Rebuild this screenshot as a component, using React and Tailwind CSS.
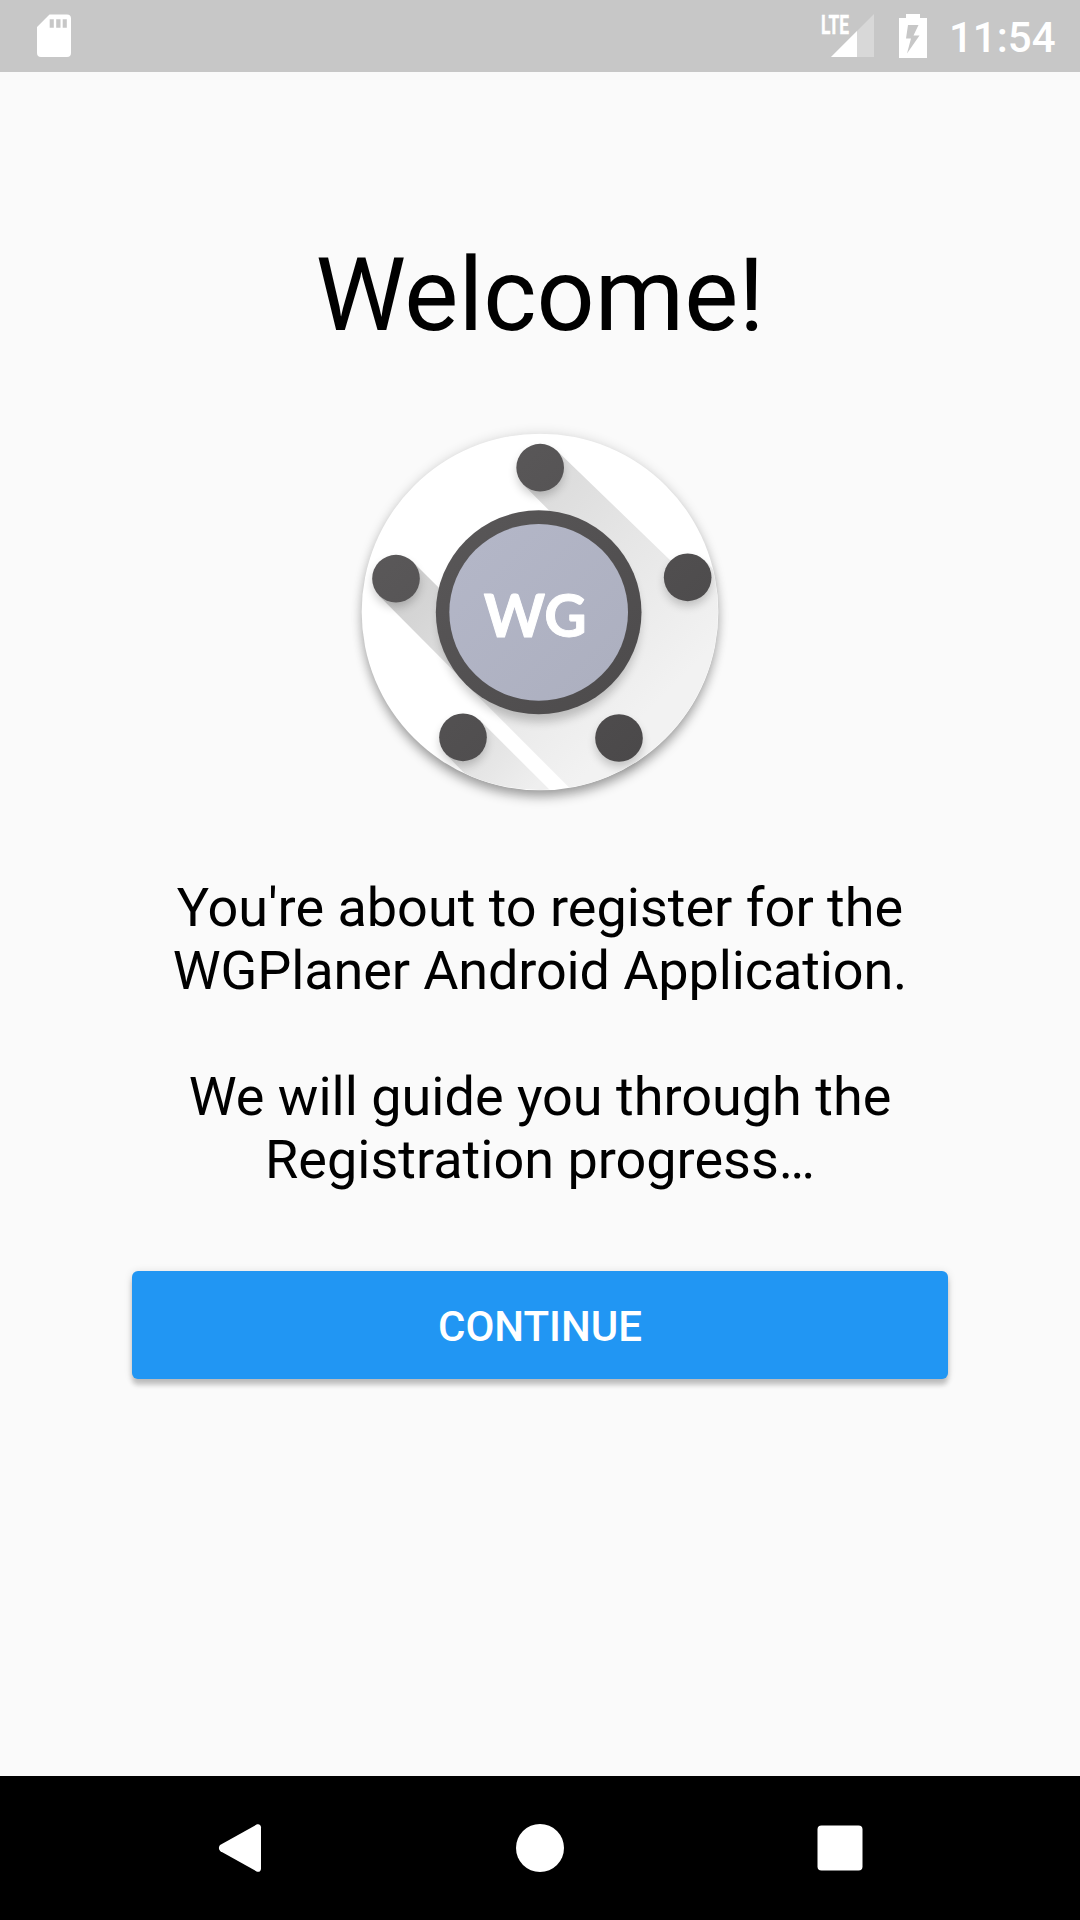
function StatusBar() {
  return (
    <header className="flex h-[72px] items-center bg-[#c7c7c7] pl-[36px] pr-[24px] text-white">
      <svg className="h-[44px] w-[36px]" viewBox="36 14 36 44" fill="none">
        <path
          fill="#fff"
          fillRule="evenodd"
          d="M49.500 14.500H67a4 4 0 0 1 4 4v34.500a4 4 0 0 1-4 4H41a4 4 0 0 1-4-4V27zM49.700 19.200v8.500h4.100v-8.500zM56.200 19.200v8.500h4.300v-8.500zM62.700 19.200v8.500h4.100v-8.500z"
        />
      </svg>
      <div className="ml-auto flex items-center">
        <svg className="h-[44px] w-[54px] overflow-visible" viewBox="821 14 54 44">
          <path d="M874 14v43h-43z" fill="#d8d8d8" />
          <path d="M857 31v26h-26z" fill="#fff" />
          <text
            x="821"
            y="33.500"
            fill="#fff"
            stroke="#fff"
            strokeWidth="0.400"
            fontFamily="Roboto, sans-serif"
            fontWeight="700"
            fontSize="26"
            textLength="28"
            lengthAdjust="spacingAndGlyphs"
          >
            LTE
          </text>
        </svg>
        <svg className="ml-[23px] h-[44px] w-[30px]" viewBox="898 14 30 44">
          <path
            fill="#fff"
            fillRule="evenodd"
            d="M906 14h14v4h7v40h-28V18h7zM908 25l-2 13.500h5L907 53.500L919.500 35.500h-6L918.500 25z"
          />
        </svg>
        <span className="ml-[21px] w-[107px] pt-[2px] text-[42px] leading-[49px] font-medium">11:54</span>
      </div>
    </header>
  );
}

const DOTS = [
  [600.5, 143],
  [168, 476],
  [1043, 472],
  [369, 952],
  [837, 954],
];

function Logo() {
  return (
    <svg className="mt-[65px] h-[400px] w-[400px] overflow-visible" viewBox="0 0 1200 1200">
      <defs>
        <clipPath id="disc">
          <circle cx="600" cy="576" r="534" />
        </clipPath>
        <linearGradient id="rim" gradientUnits="userSpaceOnUse" x1="200" y1="200" x2="950" y2="950">
          <stop offset="0" stopColor="#5b595a" />
          <stop offset="1" stopColor="#4b494a" />
        </linearGradient>
        <linearGradient id="face" gradientUnits="userSpaceOnUse" x1="400" y1="380" x2="790" y2="770">
          <stop offset="0" stopColor="#b3b6c7" />
          <stop offset="1" stopColor="#adb0c0" />
        </linearGradient>
        <linearGradient id="cast" gradientUnits="userSpaceOnUse" x1="330" y1="330" x2="900" y2="900">
          <stop offset="0" stopColor="#d8d8d8" />
          <stop offset="0.5" stopColor="#e6e6e6" />
          <stop offset="1" stopColor="#f2f2f2" />
        </linearGradient>
        <linearGradient id="castLeft" gradientUnits="userSpaceOnUse" x1="170" y1="480" x2="620" y2="930">
          <stop offset="0" stopColor="#cfcfcf" />
          <stop offset="0.4" stopColor="#dcdcdc" />
          <stop offset="1" stopColor="#ebebeb" />
        </linearGradient>
        <linearGradient id="castLow" gradientUnits="userSpaceOnUse" x1="369" y1="952" x2="560" y2="1130">
          <stop offset="0" stopColor="#dedede" />
          <stop offset="1" stopColor="#efefef" />
        </linearGradient>
        <filter id="soft" x="-20%" y="-20%" width="140%" height="140%">
          <feGaussianBlur stdDeviation="18" />
        </filter>
        <filter id="softDot" x="-50%" y="-50%" width="200%" height="200%">
          <feGaussianBlur stdDeviation="14" />
        </filter>
      </defs>

      <circle cx="600" cy="576" r="536" fill="#000" opacity="0.12" filter="url(#soft)" />
      <circle cx="600" cy="600" r="530" fill="#000" opacity="0.33" filter="url(#soft)" />
      <circle cx="600" cy="576" r="535" fill="#fff" />

      <g clipPath="url(#disc)">
        <path d="M218 425L500 705L380 792L117 527Z" fill="url(#castLeft)" />
        <path d="M651 92L1000 430L1093 421L1250 578V1250H835L378 793L600 577L700 344L550 194Z" fill="url(#cast)" />
        <path d="M420 901L700 1180H490L318 1003Z" fill="url(#castLow)" />
      </g>

      <circle cx="598" cy="604" r="302" fill="#000" opacity="0.2" filter="url(#softDot)" />
      {DOTS.map(([x, y]) => (
        <circle key={x} cx={x} cy={y + 16} r="70" fill="#000" opacity="0.2" filter="url(#softDot)" />
      ))}
      {DOTS.map(([x, y]) => (
        <circle key={x} cx={x} cy={y} r="71.500" fill="url(#rim)" />
      ))}
      <ellipse cx="596" cy="577" rx="308.500" ry="306" fill="url(#rim)" />
      <ellipse cx="596" cy="577" rx="268" ry="265" fill="url(#face)" />
      <text
        x="431"
        y="652"
        fill="#fff"
        stroke="#fff"
        strokeWidth="3"
        strokeLinejoin="round"
        fontFamily="Lato, sans-serif"
        fontWeight="700"
        fontSize="179"
        textLength="309"
        lengthAdjust="spacingAndGlyphs"
      >
        WG
      </text>
    </svg>
  );
}

function NavBar() {
  return (
    <nav className="flex h-[144px] items-center justify-between bg-black pl-[216px] pr-[216px]">
      <svg className="h-[48px] w-[48px]" viewBox="0 0 48 48" fill="#fff">
        <path d="M4.500 20.800L40.500.6C42.800-.6 45 .9 45 3.300V44.700C45 47.100 42.800 48.600 40.500 47.400L4.500 27.200C2.400 25.800 2.400 22.200 4.500 20.800Z" />
      </svg>
      <span className="h-[48px] w-[48px] rounded-full bg-white" />
      <svg className="h-[48px] w-[48px]" viewBox="0 0 48 48" fill="#fff">
        <rect x="1.500" y="1.500" width="45" height="45" rx="4" />
      </svg>
    </nav>
  );
}

export default function App() {
  return (
    <div className="flex h-[1920px] w-[1080px] flex-col overflow-hidden bg-[#fafafa] font-[Roboto,sans-serif] text-black">
      <StatusBar />
      <main className="flex flex-1 flex-col items-center pt-[163px]">
        <h1 className="text-[102px] leading-[120px]">Welcome!</h1>
        <Logo />
        <p className="mt-[56px] text-center text-[54px] leading-[63px]">
          You're about to register for the
          <br />
          <span className="tracking-[-0.12px]">WGPlaner Android Application.</span>
          <br />
          <br />
          We will guide you through the
          <br />
          Registration progress…
        </p>
        <button className="mt-[80px] h-[108px] w-[816px] rounded-[6px] bg-[#2196f3] pt-[2px] text-[42px] leading-[49px] font-medium text-white shadow-[0_6px_5px_rgba(0,0,0,0.2),0_1px_8px_rgba(0,0,0,0.12)]">
          CONTINUE
        </button>
      </main>
      <NavBar />
    </div>
  );
}
